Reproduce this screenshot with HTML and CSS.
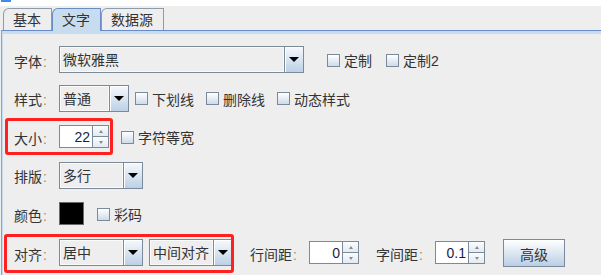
FILE: index.html
```html
<!DOCTYPE html>
<html lang="zh-CN">

<head>
    <meta charset="UTF-8">
    <meta name="viewport" content="width=device-width, initial-scale=1.0">
    <title>文字</title>
    <link rel="stylesheet" href="styles.css">
</head>

<body>
    <div class="topbar"><span class="mark"></span></div>
    <div class="tabs">
        <div class="tab">基本</div>
        <div class="tab active">文字</div>
        <div class="tab">数据源</div>
    </div>
    <div class="panel">
        <div class="row">
            <span class="label">字体<i>:</i></span>
            <div class="combo combo-font"><span class="value">微软雅黑</span><span class="arrow"></span></div>
            <span class="check first-custom"><span class="box"></span>定制</span>
            <span class="check next-custom"><span class="box"></span>定制2</span>
        </div>
        <div class="row">
            <span class="label">样式<i>:</i></span>
            <div class="combo combo-style"><span class="value">普通</span><span class="arrow"></span></div>
            <span class="check after-style"><span class="box"></span>下划线</span>
            <span class="check spaced"><span class="box"></span>删除线</span>
            <span class="check spaced"><span class="box"></span>动态样式</span>
        </div>
        <div class="row">
            <div class="marked mark-size">
                <span class="label">大小<i>:</i></span>
                <div class="spinner"><span class="num">22</span><span class="spin"><span class="up"></span><span class="down"></span></span></div>
            </div>
            <span class="check spaced"><span class="box"></span>字符等宽</span>
        </div>
        <div class="row">
            <span class="label">排版<i>:</i></span>
            <div class="combo combo-mid"><span class="value">多行</span><span class="arrow"></span></div>
        </div>
        <div class="row">
            <span class="label">颜色<i>:</i></span>
            <span class="swatch"></span>
            <span class="check after-swatch"><span class="box"></span>彩码</span>
        </div>
        <div class="row last">
            <div class="marked mark-align">
                <span class="label">对齐<i>:</i></span>
                <div class="combo combo-mid"><span class="value">居中</span><span class="arrow"></span></div>
                <div class="combo combo-mid second"><span class="value">中间对齐</span><span class="arrow"></span></div>
            </div>
            <span class="label inline">行间距<i>:</i></span>
            <div class="spinner"><span class="num">0</span><span class="spin"><span class="up"></span><span class="down"></span></span></div>
            <span class="label inline">字间距<i>:</i></span>
            <div class="spinner"><span class="num">0.1</span><span class="spin"><span class="up"></span><span class="down"></span></span></div>
            <button class="btn">高级</button>
        </div>
    </div>
</body>

</html>
```

FILE: styles.css
```css
body {
    margin: 0px;
    background: #eeeeee;
    color: #333333;
    font-family: "Liberation Sans", "Noto Sans CJK SC", sans-serif;
    font-size: 14px;
}

.topbar {
    height: 6px;
    background: #ffffff;
}

.topbar .mark {
    display: block;
    width: 10px;
    height: 2px;
    margin-left: 1px;
    background: #3d8bef;
}

.tabs {
    display: flex;
    align-items: flex-end;
    height: 22px;
    padding: 2px 0px 0px 3px;
}

.tab {
    height: 21px;
    padding: 0px 10px 0px 9px;
    line-height: 22px;
    border: 1px solid #8d9cad;
    border-bottom: none;
    border-top-left-radius: 6px;
    background: #eeeeee;
}

.tab.active {
    position: relative;
    z-index: 1;
    height: 22px;
    margin-bottom: -1px;
    border-color: #6a8bc5;
    background: #c8dcf0;
}

.panel {
    box-sizing: border-box;
    height: 245px;
    margin-left: 1px;
    padding: 15px 0px 0px 12px;
    border-top: 1px solid #6a8bc5;
    border-left: 1px solid #8aa5cc;
    box-shadow: inset 0px 3px #c8dcf0, inset 1px 0px #c8dcf0;
    display: flex;
    flex-direction: column;
    gap: 11.6px;
}

.row {
    display: flex;
    align-items: center;
    height: 27px;
    flex: none;
}

.row.last {
    height: 28px;
}

.label {
    flex: none;
    width: 45px;
    padding-top: 2px;
}

.label i {
    font-style: normal;
    color: #b08850;
    margin-left: 1px;
}

.label.inline {
    width: 59px;
    margin-left: 17px;
}

.combo {
    display: flex;
    box-sizing: border-box;
    height: 27px;
    border: 1px solid #7a8a99;
    background: #eeeeee;
}

.combo .value {
    flex: 1;
    padding: 2px 0px 0px 3px;
    line-height: 23px;
    box-shadow: inset 0px 0px 0px 1px #fafafa;
}

.combo .arrow {
    width: 18px;
    display: flex;
    align-items: center;
    justify-content: center;
    border-left: 1px solid #7a8a99;
    background: linear-gradient(#f6f9fc, #bcd0e6);
    box-shadow: inset 1px 1px #ffffff;
}

.combo .arrow::after {
    content: "";
    border-left: 5px solid transparent;
    border-right: 5px solid transparent;
    border-top: 5px solid #000000;
}

.combo-font {
    width: 245px;
}

.combo-style {
    width: 70px;
}

.combo-mid {
    width: 84px;
}

.combo.second {
    margin-left: 6px;
}

.check {
    display: flex;
    align-items: center;
    gap: 4px;
    padding-top: 1px;
}

.check .box {
    width: 11px;
    height: 11px;
    border: 1px solid #7a8a99;
    background: linear-gradient(#ffffff, #cedbeb);
}

.first-custom {
    margin-left: 23px;
}

.next-custom {
    margin-left: 14px;
}

.after-style {
    margin-left: 6px;
}

.spaced {
    margin-left: 12px;
}

.after-swatch {
    margin-left: 13px;
}

.spinner {
    display: flex;
    box-sizing: border-box;
    width: 50px;
    height: 23px;
    border: 1px solid #7a8a99;
    background: #ffffff;
}

.spinner .num {
    flex: 1;
    padding: 1px 2px 0px 0px;
    text-align: right;
    line-height: 21px;
    color: #1c1c48;
}

.spinner .spin {
    width: 15px;
    display: flex;
    flex-direction: column;
    border-left: 1px solid #7a8a99;
}

.spin span {
    flex: 1;
    display: flex;
    align-items: center;
    justify-content: center;
    background: linear-gradient(#fbfcfe, #e2eaf3);
}

.spin span + span {
    border-top: 1px solid #7a8a99;
}

.spin .up::after {
    content: "";
    border-left: 2px solid transparent;
    border-right: 2px solid transparent;
    border-bottom: 3px solid #8a8a8a;
}

.spin .down::after {
    content: "";
    border-left: 2px solid transparent;
    border-right: 2px solid transparent;
    border-top: 3px solid #8a8a8a;
}

.swatch {
    box-sizing: border-box;
    width: 25px;
    height: 23px;
    border: 1px solid #6a6a6a;
    background: #000000;
}

.btn {
    width: 62px;
    height: 28px;
    margin-left: 18px;
    padding: 2px 0px 0px;
    border: 1px solid #7a8a99;
    background: linear-gradient(#ffffff, #b9cfe5);
    color: #333333;
    font: inherit;
}

.marked {
    position: relative;
    display: flex;
    align-items: center;
    align-self: stretch;
}

.marked::after {
    content: "";
    position: absolute;
    border: 3px solid #ff2020;
    border-radius: 3px;
    pointer-events: none;
}

.mark-size::after {
    left: -9px;
    top: -5px;
    right: -4px;
    bottom: -5px;
}

.mark-align::after {
    left: -10px;
    top: -5px;
    right: -1px;
    bottom: -6px;
}
```
